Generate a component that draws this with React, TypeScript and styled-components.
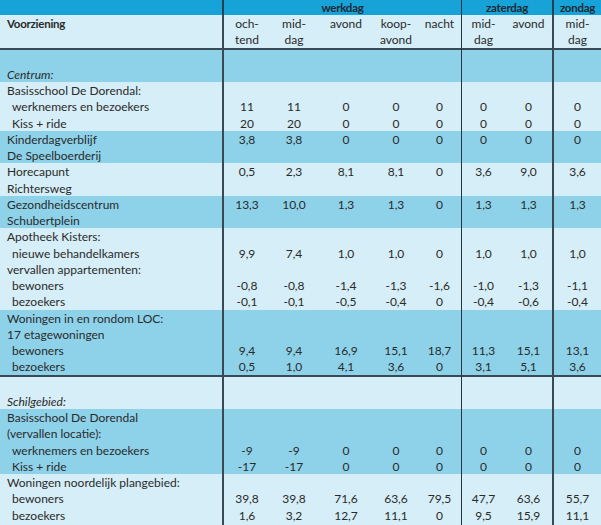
import React from 'react';
import styled, { createGlobalStyle } from 'styled-components';

const Global = createGlobalStyle`
  html, body { margin: 0; padding: 0; background: #ffffff; }
  body { font-family: Lato, "Open Sans", sans-serif; }
`;

const COLS = '222px 48px 48px 56px 44px 43px 44px 47px 49px';
const LINE = 16.25;

type Tone = 'light' | 'mid';
type Div = 'thick' | 'thin' | undefined;

const dividerFor = (i: number): Div => (i === 1 || i === 8 ? 'thick' : i === 6 ? 'thin' : undefined);

const Table = styled.div`
  width: 601px;
  height: 525px;
  overflow: hidden;
  font-family: Lato, "Open Sans", sans-serif;
  font-size: 12px;
  color: #2a2a2a;
  background: #d6eef7;
`;

const TopBand = styled.div`
  display: grid;
  grid-template-columns: 222px 239px 91px 49px;
  height: 15px;
  background: #17a2d8;
`;

const TopCell = styled.div<{ $divider?: Div }>`
  box-sizing: border-box;
  height: 15px;
  line-height: 16px;
  text-align: center;
  font-weight: 700;
  font-size: 11.5px;
  letter-spacing: -0.25px;
  color: #1d2a33;
  border-left: ${(p) => (p.$divider === 'thick' ? '2px solid #2a4050' : p.$divider === 'thin' ? '1px solid #1f3544' : 'none')};
`;

const Band = styled.div<{ $tone: Tone; $rule?: boolean }>`
  background: ${(p) => (p.$tone === 'mid' ? '#8ed2ea' : '#d6eef7')};
  border-bottom: ${(p) => (p.$rule ? '2px solid #3a4a54' : 'none')};
`;

const Line = styled.div`
  display: grid;
  grid-template-columns: ${COLS};
  height: ${LINE}px;
  line-height: ${LINE + 2}px;
`;

const Cell = styled.div<{ $divider?: Div; $label?: boolean; $indent?: boolean; $italic?: boolean; $bold?: boolean }>`
  box-sizing: border-box;
  white-space: nowrap;
  overflow: visible;
  text-align: ${(p) => (p.$label ? 'left' : 'center')};
  padding-left: ${(p) => (p.$label ? (p.$indent ? '12px' : '7px') : '0')};
  font-style: ${(p) => (p.$italic ? 'italic' : 'normal')};
  font-weight: ${(p) => (p.$bold ? 700 : 400)};
  font-size: ${(p) => (p.$bold ? '11.5px' : '12px')};
  letter-spacing: ${(p) => (p.$bold ? '-0.25px' : '0')};
  border-left: ${(p) => (p.$divider === 'thick' ? '2px solid #3a4a54' : p.$divider === 'thin' ? '1px solid #26343c' : 'none')};
`;

type Row = { label: string; indent?: boolean; italic?: boolean; bold?: boolean; values?: string[] };
type Section = { tone: Tone; rule?: boolean; rows: Row[] };

const header: Section = {
  tone: 'light',
  rule: true,
  rows: [
    { label: 'Voorziening', bold: true, values: ['och-', 'mid-', 'avond', 'koop-', 'nacht', 'mid-', 'avond', 'mid-'] },
    { label: '', values: ['tend', 'dag', '', 'avond', '', 'dag', '', 'dag'] },
  ],
};

const sections: Section[] = [
  { tone: 'mid', rows: [{ label: '' }, { label: 'Centrum:', italic: true }] },
  {
    tone: 'light',
    rows: [
      { label: 'Basisschool De Dorendal:' },
      { label: 'werknemers en bezoekers', indent: true, values: ['11', '11', '0', '0', '0', '0', '0', '0'] },
      { label: 'Kiss + ride', indent: true, values: ['20', '20', '0', '0', '0', '0', '0', '0'] },
    ],
  },
  {
    tone: 'mid',
    rows: [
      { label: 'Kinderdagverblijf', values: ['3,8', '3,8', '0', '0', '0', '0', '0', '0'] },
      { label: 'De Speelboerderij' },
    ],
  },
  {
    tone: 'light',
    rows: [
      { label: 'Horecapunt', values: ['0,5', '2,3', '8,1', '8,1', '0', '3,6', '9,0', '3,6'] },
      { label: 'Richtersweg' },
    ],
  },
  {
    tone: 'mid',
    rows: [
      { label: 'Gezondheidscentrum', values: ['13,3', '10,0', '1,3', '1,3', '0', '1,3', '1,3', '1,3'] },
      { label: 'Schubertplein' },
    ],
  },
  {
    tone: 'light',
    rows: [
      { label: 'Apotheek Kisters:' },
      { label: 'nieuwe behandelkamers', indent: true, values: ['9,9', '7,4', '1,0', '1,0', '0', '1,0', '1,0', '1,0'] },
      { label: 'vervallen appartementen:' },
      { label: 'bewoners', indent: true, values: ['-0,8', '-0,8', '-1,4', '-1,3', '-1,6', '-1,0', '-1,3', '-1,1'] },
      { label: 'bezoekers', indent: true, values: ['-0,1', '-0,1', '-0,5', '-0,4', '0', '-0,4', '-0,6', '-0,4'] },
    ],
  },
  {
    tone: 'mid',
    rule: true,
    rows: [
      { label: 'Woningen in en rondom LOC:' },
      { label: '17 etagewoningen' },
      { label: 'bewoners', indent: true, values: ['9,4', '9,4', '16,9', '15,1', '18,7', '11,3', '15,1', '13,1'] },
      { label: 'bezoekers', indent: true, values: ['0,5', '1,0', '4,1', '3,6', '0', '3,1', '5,1', '3,6'] },
    ],
  },
  { tone: 'light', rows: [{ label: '' }, { label: 'Schilgebied:', italic: true }] },
  {
    tone: 'mid',
    rows: [
      { label: 'Basisschool De Dorendal' },
      { label: '(vervallen locatie):' },
      { label: 'werknemers en bezoekers', indent: true, values: ['-9', '-9', '0', '0', '0', '0', '0', '0'] },
      { label: 'Kiss + ride', indent: true, values: ['-17', '-17', '0', '0', '0', '0', '0', '0'] },
    ],
  },
  {
    tone: 'light',
    rows: [
      { label: 'Woningen noordelijk plangebied:' },
      { label: 'bewoners', indent: true, values: ['39,8', '39,8', '71,6', '63,6', '79,5', '47,7', '63,6', '55,7'] },
      { label: 'bezoekers', indent: true, values: ['1,6', '3,2', '12,7', '11,1', '0', '9,5', '15,9', '11,1'] },
      { label: '' },
    ],
  },
];

const renderSection = (s: Section, key: number) => (
  <Band key={key} $tone={s.tone} $rule={s.rule}>
    {s.rows.map((r, ri) => {
      const vals = r.values ?? ['', '', '', '', '', '', '', ''];
      return (
        <Line key={ri}>
          <Cell $label $indent={r.indent} $italic={r.italic} $bold={r.bold}>
            {r.label}
          </Cell>
          {vals.map((v, vi) => (
            <Cell key={vi} $divider={dividerFor(vi + 1)}>
              {v}
            </Cell>
          ))}
        </Line>
      );
    })}
  </Band>
);

export default function App() {
  return (
    <>
      <Global />
      <Table>
        <TopBand>
          <TopCell />
          <TopCell $divider="thick">werkdag</TopCell>
          <TopCell $divider="thin">zaterdag</TopCell>
          <TopCell $divider="thick">zondag</TopCell>
        </TopBand>
        {renderSection(header, -1)}
        {sections.map((s, i) => renderSection(s, i))}
      </Table>
    </>
  );
}
